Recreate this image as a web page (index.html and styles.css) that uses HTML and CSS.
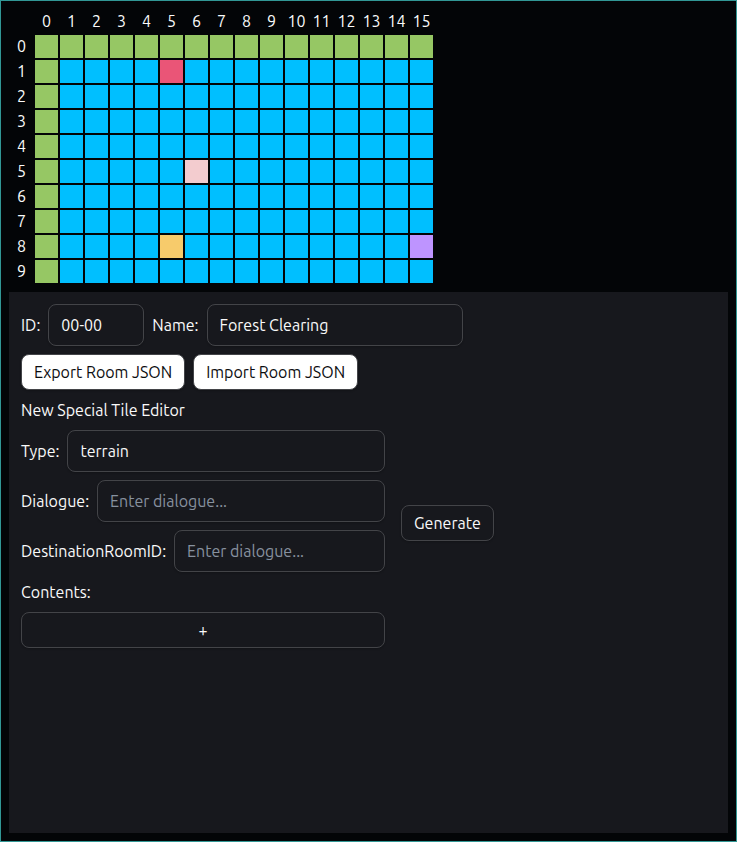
FILE: index.html
```html
<!DOCTYPE html>
<html lang="en">
<head>
<meta charset="utf-8">
<meta name="viewport" content="width=device-width, initial-scale=1">
<title>Room Editor</title>
<link rel="stylesheet" href="styles.css">
</head>
<body>
<main class="app">
  <table class="map" id="map"></table>
  <section class="panel">
    <div class="row">
      <label for="room-id">ID:</label>
      <input class="field field-id" id="room-id" type="text" value="00-00">
      <label for="room-name">Name:</label>
      <input class="field field-name" id="room-name" type="text" value="Forest Clearing">
    </div>
    <div class="row">
      <button class="button button-solid" type="button">Export Room JSON</button>
      <button class="button button-solid" type="button">Import Room JSON</button>
    </div>
    <form class="editor">
      <div class="fields">
        <div class="heading">New Special Tile Editor</div>
        <div class="row">
          <label for="type">Type:</label>
          <input class="field field-fill" id="type" type="text" value="terrain">
        </div>
        <div class="row">
          <label for="dialogue">Dialogue:</label>
          <input class="field field-fill" id="dialogue" type="text" placeholder="Enter dialogue...">
        </div>
        <div class="row">
          <label for="destination">DestinationRoomID:</label>
          <input class="field field-fill" id="destination" type="text" placeholder="Enter dialogue...">
        </div>
        <label for="add-content">Contents:</label>
        <button class="button" id="add-content" type="button">+</button>
      </div>
      <button class="button" type="button">Generate</button>
    </form>
  </section>
</main>
<script src="map.js"></script>
</body>
</html>
```
FILE: styles.css
```css
* {
  box-sizing: border-box;
}

body {
  margin: 0;
  background: #030507;
  color: #fafafa;
  font-family: Ubuntu, "Noto Sans", sans-serif;
  font-size: 16px;
  line-height: 24px;
}

.app {
  display: flex;
  flex-direction: column;
  align-items: flex-start;
  gap: 8px;
  min-height: 100vh;
  padding: 8px;
  border: 1px solid #319795;
}

.map {
  border-collapse: separate;
  border-spacing: 0;
  table-layout: fixed;
}

.map th,
.map td {
  width: 25px;
  height: 25px;
  padding: 0;
}

.map th {
  font-weight: 400;
  line-height: 25px;
  text-align: center;
}

.map td {
  border: 1px solid #030507;
}

.water { background: #00bfff; }
.grass { background: #96c764; }
.enemy { background: #ea5577; }
.npc { background: #f3cccf; }
.chest { background: #f7cb6b; }
.portal { background: #be94ff; }

.panel {
  display: flex;
  flex: 1;
  flex-direction: column;
  align-self: stretch;
  gap: 8px;
  padding: 12px;
  background: #17181d;
}

.row {
  display: flex;
  align-items: center;
  gap: 8px;
}

.editor {
  display: flex;
  align-items: center;
  gap: 16px;
}

.fields {
  display: flex;
  flex-direction: column;
  gap: 8px;
  width: 364px;
}

.field,
.button {
  border: 1px solid #434448;
  border-radius: 8px;
  background: transparent;
  color: inherit;
  font: inherit;
  box-shadow: 0 1px 2px rgb(0 0 0 / 20%);
}

.field {
  height: 42px;
  min-width: 0;
  padding: 8px 12px;
}

.field::placeholder {
  color: #87919f;
  opacity: 1;
}

.field-id { width: 96px; }
.field-name { width: 256px; }
.field-fill { flex: 1; }

.button {
  height: 36px;
  padding: 0 12px;
}

.button-solid {
  background: #fff;
  color: #0c0d10;
}
```
FILE: map.js
```js
const COLUMNS = 16;
const ROWS = 10;
const specialTiles = { "5,1": "enemy", "6,5": "npc", "5,8": "chest", "15,8": "portal" };

function tileAt(x, y) {
  return specialTiles[`${x},${y}`] || (x === 0 || y === 0 ? "grass" : "water");
}

function addHeading(row, text, scope) {
  const cell = document.createElement("th");
  cell.scope = scope;
  cell.textContent = text;
  row.append(cell);
}

const map = document.getElementById("map");
const header = map.createTHead().insertRow();
header.insertCell();
for (let x = 0; x < COLUMNS; x++) addHeading(header, x, "col");

const body = map.createTBody();
for (let y = 0; y < ROWS; y++) {
  const row = body.insertRow();
  addHeading(row, y, "row");
  for (let x = 0; x < COLUMNS; x++) row.insertCell().className = tileAt(x, y);
}
```
